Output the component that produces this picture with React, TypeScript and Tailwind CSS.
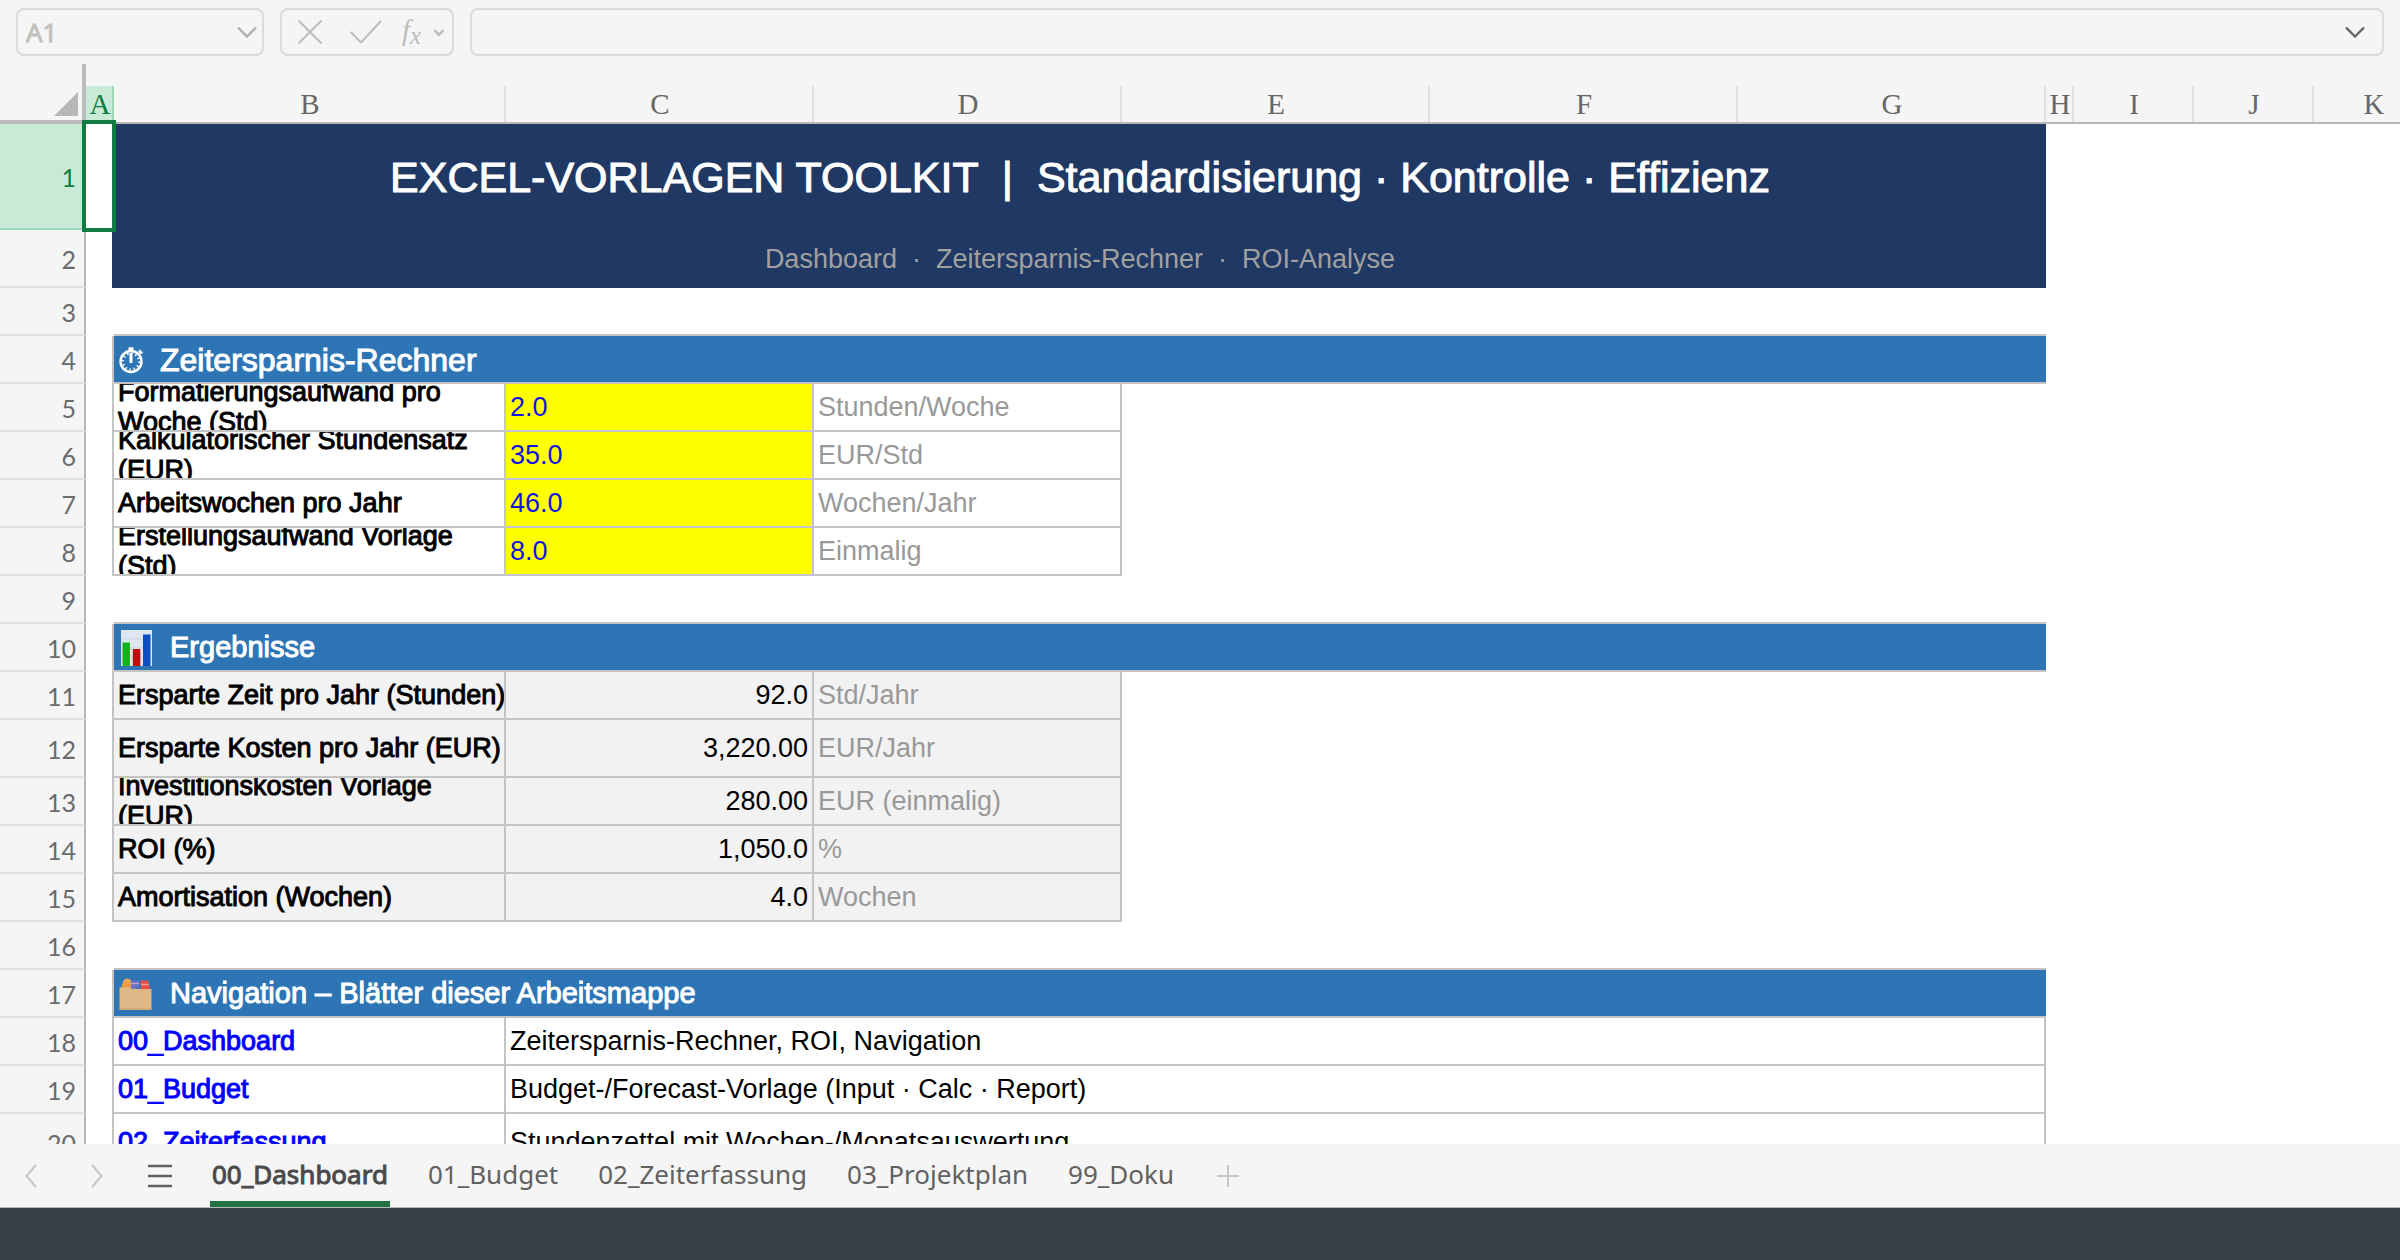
import { useState } from "react";
import type { ReactNode } from "react";

type RowProps = {
  n: number;
  height?: string;
  children?: ReactNode;
};

type Entry = { n: number; label: string; value: string; unit: string; tall?: boolean; nowrap?: boolean };

const inputs: Entry[] = [
  { n: 5, label: "Formatierungsaufwand pro Woche (Std)", value: "2.0", unit: "Stunden/Woche" },
  { n: 6, label: "Kalkulatorischer Stundensatz (EUR)", value: "35.0", unit: "EUR/Std" },
  { n: 7, label: "Arbeitswochen pro Jahr", value: "46.0", unit: "Wochen/Jahr" },
  { n: 8, label: "Erstellungsaufwand Vorlage (Std)", value: "8.0", unit: "Einmalig" },
];

const results: Entry[] = [
  { n: 11, label: "Ersparte Zeit pro Jahr (Stunden)", value: "92.0", unit: "Std/Jahr", nowrap: true },
  { n: 12, label: "Ersparte Kosten pro Jahr (EUR)", value: "3,220.00", unit: "EUR/Jahr", tall: true, nowrap: true },
  { n: 13, label: "Investitionskosten Vorlage (EUR)", value: "280.00", unit: "EUR (einmalig)" },
  { n: 14, label: "ROI (%)", value: "1,050.0", unit: "%" },
  { n: 15, label: "Amortisation (Wochen)", value: "4.0", unit: "Wochen" },
];

const links = [
  { n: 18, name: "00_Dashboard", text: "Zeitersparnis-Rechner, ROI, Navigation" },
  { n: 19, name: "01_Budget", text: "Budget-/Forecast-Vorlage (Input · Calc · Report)" },
  { n: 20, name: "02_Zeiterfassung", text: "Stundenzettel mit Wochen-/Monatsauswertung", tall: true },
];

const columns = ["B", "C", "D", "E", "F", "G", "H", "I", "J", "K"];
const tabs = ["00_Dashboard", "01_Budget", "02_Zeiterfassung", "03_Projektplan", "99_Doku"];

const cell = "border-r-2 border-b-2 border-[#c4c4c4] p-0";
const inner = "flex items-center overflow-hidden px-1 leading-[30px]";
const bold = "[-webkit-text-stroke:1px_currentColor]";

function Chevron({ className }: { className: string }) {
  return (
    <svg viewBox="0 0 20 12" className={className} fill="none" stroke="currentColor" strokeWidth="2.4">
      <path d="M1 1.5 10 10.5 19 1.5" />
    </svg>
  );
}

function Row({ n, height = "h-[46px]", children }: RowProps) {
  return (
    <tr>
      <th className="border-r-2 border-b-2 border-r-[#b7b7b7] border-b-[#e1e1e1] bg-[#f5f5f5] p-0 font-[Lato] text-[25px] font-normal text-[#6b6b6b]">
        <div className={`flex items-center justify-end pt-[3px] pr-2 ${height}`}>{n}</div>
      </th>
      {children}
    </tr>
  );
}

function SpacerRow({ n }: { n: number }) {
  return (
    <Row n={n}>
      <td className="p-0" />
      <td colSpan={6} className="border-b-2 border-[#c4c4c4] p-0" />
    </Row>
  );
}

function SectionRow({ n, icon, title, size }: { n: number; icon: ReactNode; title: string; size: string }) {
  return (
    <Row n={n}>
      <td className="border-r-2 border-[#c4c4c4] p-0" />
      <td colSpan={6} className="border-b-2 border-[#c4c4c4] bg-[#2e75b6] p-0">
        <div className={`flex h-[46px] items-center gap-4 pt-0.5 pl-1 text-white ${bold}`}>
          {icon}
          <h2 className={size}>{title}</h2>
        </div>
      </td>
    </Row>
  );
}

function EntryRow({ entry, result }: { entry: Entry; result?: boolean }) {
  const height = entry.tall ? "h-[56px]" : "h-[46px]";
  const bg = result ? "bg-[#f2f2f2]" : "bg-white";
  return (
    <Row n={entry.n} height={height}>
      <td className="border-r-2 border-[#c4c4c4] p-0" />
      <td className={`${cell} ${bg}`}>
        <div className={`${inner} ${bold} ${height} ${entry.nowrap ? "whitespace-nowrap" : ""}`}>{entry.label}</div>
      </td>
      <td className={`${cell} ${result ? bg : "bg-[#ffff00]"}`}>
        <div className={`${inner} ${height} ${result ? "justify-end" : "text-[#1414e0]"}`}>{entry.value}</div>
      </td>
      <td className={`${cell} ${bg}`}>
        <div className={`${inner} ${height} text-[#999999]`}>{entry.unit}</div>
      </td>
    </Row>
  );
}

function Stopwatch() {
  return (
    <svg viewBox="0 0 26 28" className="h-7 w-[26px]" fill="none" stroke="white">
      <circle cx="13" cy="15.5" r="10.5" strokeWidth="2.4" />
      <circle cx="13" cy="15.5" r="8" strokeWidth="2.2" strokeDasharray="1.4 2.79" />
      <path d="M13 7v10" strokeWidth="3" />
      <path d="M10.5 2.8h5M13 2v4M21 4.500l3 3" strokeWidth="3" />
    </svg>
  );
}

function BarChart() {
  return (
    <svg viewBox="-2 0 36 36" className="size-9">
      <rect x="1" width="31" height="36" fill="#dde6f1" />
      <path d="M1 9h31M1 18h31M1 27h31" stroke="#c9d5e5" strokeWidth="1" />
      <rect x="2.5" y="12.5" width="7.5" height="23.5" fill="#12b41c" />
      <rect x="12.8" y="19" width="7.5" height="17" fill="#c00d0d" />
      <rect x="23" y="4.5" width="7.5" height="31.5" fill="#0b4fc0" />
    </svg>
  );
}

function CardDividers() {
  return (
    <svg viewBox="0 0 36 36" className="size-9">
      <path d="M3 13 5 6q1-3.500 4-3.500 4 0 5 4l3 6z" fill="#e5a355" />
      <path d="M4 9.500h10" stroke="#f29a35" strokeWidth="3" />
      <path d="M13 4.500h8v8h-8z" fill="#6a6fce" />
      <path d="M13 7.500h8" stroke="#c0a3b5" strokeWidth="1.500" />
      <path d="M22.500 4.500h7.500l2 8.500h-9z" fill="#ee4b42" />
      <path d="M23 8.500h8" stroke="#e9a48c" strokeWidth="1.500" />
      <path d="M1.500 11.500h10l2 1.500h20V33q0 1-1 1h-30q-1 0-1-1z" fill="#deb887" />
      <path d="M1.500 33h32" stroke="#cfa56f" strokeWidth="1.500" />
    </svg>
  );
}

function FormulaBar() {
  return (
    <div className="flex h-16 shrink-0 items-start gap-4 px-4 pt-2 text-[#c3c1bf]">
      <div className="flex h-12 w-[248px] items-center rounded-lg border-2 border-[#dadada] pr-[5px] pl-2">
        <input
          aria-label="Name Box"
          defaultValue="A1"
          className={`w-full min-w-0 bg-transparent font-['Noto_Sans'] text-[26px] outline-none ${bold}`}
        />
        <button aria-label="Open name list" className="text-[#b0b0b0]">
          <Chevron className="h-3 w-5" />
        </button>
      </div>
      <div className="flex h-12 w-[174px] items-center rounded-lg border-2 border-[#dadada] pl-4 text-[#bdbdbd]">
        <button aria-label="Cancel">
          <svg viewBox="0 0 24 24" className="size-6" fill="none" stroke="currentColor" strokeWidth="2">
            <path d="M.5.5 23.500 23.500M23.500.5.5 23.500" />
          </svg>
        </button>
        <button aria-label="Enter" className="ml-7">
          <svg viewBox="0 0 32 24" className="h-6 w-8" fill="none" stroke="currentColor" strokeWidth="2">
            <path d="M.8 12 11 22.500 31 1" />
          </svg>
        </button>
        <button aria-label="Insert function" className="ml-5 flex items-center gap-[13px]">
          <span className="font-['Liberation_Serif'] text-[29px] leading-7 italic">
            f<span className="align-[-4px] text-[25px] leading-none">x</span>
          </span>
          <Chevron className="h-[7px] w-[10px] overflow-visible [stroke-width:5]" />
        </button>
      </div>
      <div className="flex h-12 flex-1 items-center rounded-lg border-2 border-[#dadada] pr-[17px] pl-3">
        <input aria-label="Formula Bar" className="min-w-0 flex-1 bg-transparent text-[26px] text-black outline-none" />
        <button aria-label="Expand formula bar" className="text-[#666666]">
          <Chevron className="h-3 w-5" />
        </button>
      </div>
    </div>
  );
}

function Sheet() {
  return (
    <div className="min-h-0 flex-1 overflow-hidden bg-white">
      <table className="w-[2434px] table-fixed border-separate border-spacing-0 font-['Liberation_Sans',sans-serif] text-[27px] text-black">
        <colgroup>
          <col className="w-[86px]" />
          <col className="w-[28px]" />
          <col className="w-[392px]" />
          <col className="w-[308px]" />
          <col className="w-[308px]" />
          <col className="w-[308px]" />
          <col className="w-[308px]" />
          <col className="w-[308px]" />
          <col className="w-[28px]" />
          <col className="w-[120px]" />
          <col className="w-[120px]" />
          <col className="w-[120px]" />
        </colgroup>
        <thead className="bg-[#f5f5f5] font-['Liberation_Serif',serif] text-[29px] leading-9">
          <tr>
            <th className="border-r-4 border-b-4 border-[#bbbbbb] p-0 align-bottom">
              <svg viewBox="0 0 24 24" className="mr-1 mb-1 ml-auto size-6">
                <path d="M24 0v24H0z" fill="#b7b7b7" />
              </svg>
            </th>
            <th className="p-0 pt-[22px] font-normal text-[#107c41]">
              <div className="h-[38px] border-r-2 border-b-4 border-r-[#a0d8b9] border-b-[#107c41] bg-[#caead8] pl-0.5">
                A
              </div>
            </th>
            {columns.map((c) => (
              <th key={c} className="border-b-2 border-[#b7b7b7] p-0 pt-[22px] font-normal text-[#666666]">
                <div className="h-9 border-r-2 border-[#e1e1e1] pl-0.5">{c}</div>
              </th>
            ))}
          </tr>
        </thead>
        <tbody>
          <tr>
            <th className="border-r-2 border-b-2 border-r-[#b7b7b7] border-b-[#a0d8b9] bg-[#caead8] p-0 font-[Lato] text-[25px] font-normal text-[#107c41]">
              <div className="flex h-[104px] items-center justify-end pt-[3px] pr-2">1</div>
            </th>
            <td className="relative border-r-2 border-[#203864] p-0">
              {/* selection frame around A1 */}
              <div className="absolute -top-1 -right-1 -bottom-0.5 -left-1 border-4 border-[#107c41]" />
            </td>
            <td colSpan={6} className="bg-[#203864] p-0 text-center">
              <h1 className={`text-[43px] whitespace-pre text-white ${bold}`}>
                {"EXCEL-VORLAGEN TOOLKIT  |  Standardisierung · Kontrolle · Effizienz"}
              </h1>
            </td>
          </tr>
          <Row n={2} height="h-[56px]">
            <td className="border-r-2 border-[#203864] p-0" />
            <td colSpan={6} className="bg-[#203864] p-0 text-center whitespace-pre text-[#a0a0a0]">
              {"Dashboard  ·  Zeitersparnis-Rechner  ·  ROI-Analyse"}
            </td>
          </Row>
          <SpacerRow n={3} />
          <SectionRow n={4} icon={<Stopwatch />} title="Zeitersparnis-Rechner" size="text-[32px]" />
          {inputs.map((entry) => (
            <EntryRow key={entry.n} entry={entry} />
          ))}
          <SpacerRow n={9} />
          <SectionRow n={10} icon={<BarChart />} title="Ergebnisse" size="text-[29px]" />
          {results.map((entry) => (
            <EntryRow key={entry.n} entry={entry} result />
          ))}
          <SpacerRow n={16} />
          <SectionRow
            n={17}
            icon={<CardDividers />}
            title="Navigation – Blätter dieser Arbeitsmappe"
            size="text-[29px]"
          />
          {links.map((l) => (
            <Row key={l.n} n={l.n} height={l.tall ? "h-[56px]" : "h-[46px]"}>
              <td className="border-r-2 border-[#c4c4c4] p-0" />
              <td className={cell}>
                <div className={inner}>
                  <a href={`#${l.name}`} className={`text-[#0000ff] ${bold}`}>
                    {l.name}
                  </a>
                </div>
              </td>
              <td colSpan={5} className={cell}>
                <div className={inner}>{l.text}</div>
              </td>
            </Row>
          ))}
        </tbody>
      </table>
    </div>
  );
}

export default function App() {
  const [active, setActive] = useState("00_Dashboard");

  return (
    <div className="flex h-screen flex-col overflow-hidden bg-[#f5f5f5]">
      <FormulaBar />
      <Sheet />
      <nav className="flex h-16 shrink-0 items-stretch border-b border-[#b5b9bc] pl-[25px] font-['Noto_Sans'] text-[26px] text-[#616161]">
        <button aria-label="Previous sheet" className="text-[#c6c6c6]">
          <svg viewBox="0 0 12 24" className="h-6 w-3" fill="none" stroke="currentColor" strokeWidth="2">
            <path d="M11 1 1.500 12 11 23" />
          </svg>
        </button>
        <button aria-label="Next sheet" className="ml-[54px] text-[#c6c6c6]">
          <svg viewBox="0 0 12 24" className="h-6 w-3" fill="none" stroke="currentColor" strokeWidth="2">
            <path d="M1 1 10.500 12 1 23" />
          </svg>
        </button>
        <button aria-label="All sheets" className="mr-[38px] ml-[45px]">
          <svg viewBox="0 0 24 24" className="size-6" fill="none" stroke="currentColor" strokeWidth="2.500">
            <path d="M0 2h24M0 12h24M0 22h24" />
          </svg>
        </button>
        <div className="flex gap-9">
          {tabs.map((t) => (
            <button
              key={t}
              onClick={() => setActive(t)}
              className={`border-t-4 border-b-6 border-t-transparent px-0.5 ${
                t === active
                  ? "border-b-[#217346] text-[#4a4a4a] [-webkit-text-stroke:1px_currentColor]"
                  : "border-b-transparent"
              }`}
            >
              {t}
            </button>
          ))}
        </div>
        <button aria-label="New sheet" className="ml-10 text-[#c6c6c6]">
          <svg viewBox="0 0 24 24" className="size-6" fill="none" stroke="currentColor" strokeWidth="2">
            <path d="M12 1v22M1 12h22" />
          </svg>
        </button>
      </nav>
      <footer className="h-[52px] shrink-0 bg-[#383e45]" />
    </div>
  );
}
